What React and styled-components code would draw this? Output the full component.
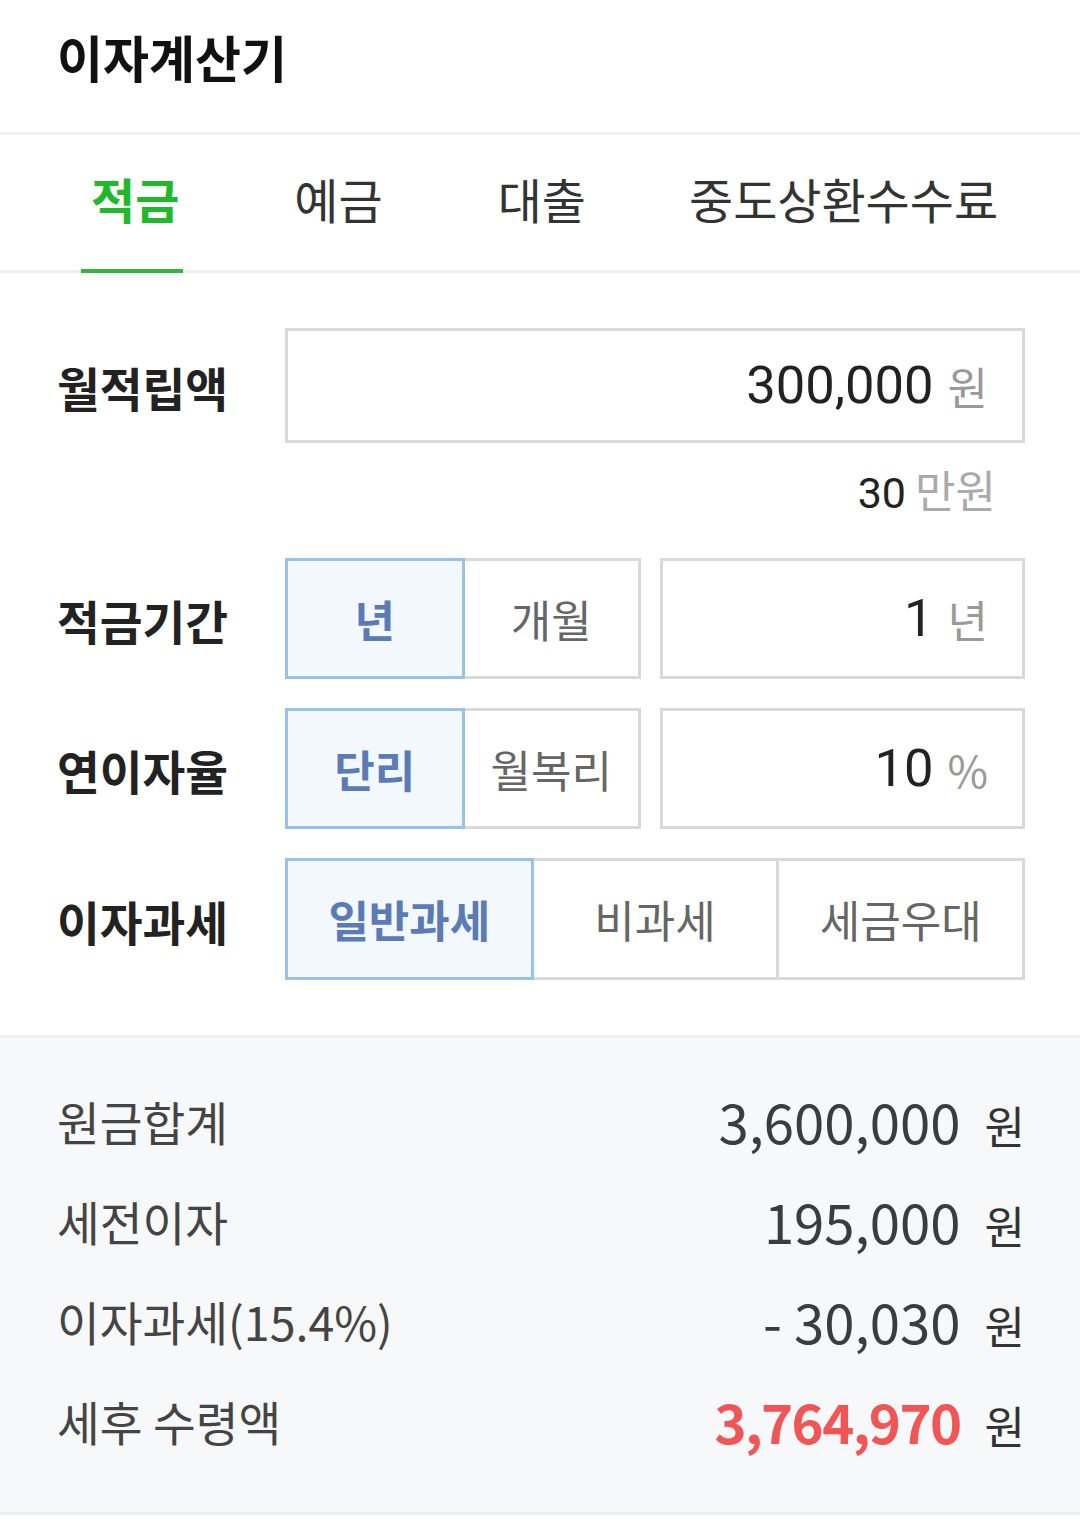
import styled, { createGlobalStyle } from "styled-components";

const GlobalStyle = createGlobalStyle`
    body {
        margin: 0;
        background: #ffffff;
        font-family: "Noto Sans CJK KR", "Noto Sans", sans-serif;
        color: #222;
    }
`;

const Page = styled.div`
    width: 1080px;
    display: flex;
    flex-direction: column;
`;

// Top bar with the page title
const Header = styled.header`
    height: 135px;
    box-sizing: border-box;
    padding: 31px 57px 0;
    border-bottom: 3px solid #eef0f2;
`;

const Title = styled.h1`
    margin: 0;
    font-size: 50px;
    line-height: 1;
    font-weight: 700;
    color: #111;
`;

// Calculator type tabs
const TabBar = styled.nav`
    height: 138px;
    box-sizing: border-box;
    display: flex;
    align-items: stretch;
    gap: 101px;
    padding-left: 81px;
    border-bottom: 3px solid #eceef0;
`;

const Tab = styled.div`
    display: flex;
    align-items: center;
    padding: 0 4px 8px 10px;
    margin-bottom: -3px;
    font-size: 48px;
    line-height: 1;
    font-weight: ${(p) => (p.$active ? 700 : 400)};
    color: ${(p) => (p.$active ? "#20b92b" : "#333")};
    border-bottom: 4px solid ${(p) => (p.$active ? "#2fb83a" : "transparent")};

    &:last-child {
        margin-left: -12px;
    }
`;

// Input form
const Form = styled.section`
    display: flex;
    flex-direction: column;
    padding: 55px 55px 55px 57px;
`;

const FormRow = styled.div`
    display: grid;
    grid-template-columns: 228px 1fr;
    align-items: center;
    margin-top: ${(p) => p.$gap || 0}px;
`;

const Label = styled.div`
    font-size: 46.5px;
    line-height: 1;
    font-weight: 700;
    color: #222;
    padding-top: 4px;
`;

const Controls = styled.div`
    display: grid;
    grid-template-columns: ${(p) => p.$cols};
    gap: 19px;
`;

const Segments = styled.div`
    display: flex;
`;

const Segment = styled.div`
    position: relative;
    z-index: ${(p) => (p.$active ? 1 : 0)};
    flex: 1;
    height: ${(p) => p.$h}px;
    box-sizing: border-box;
    display: flex;
    align-items: center;
    justify-content: center;
    margin-left: -3px;
    &:first-child {
        margin-left: 0;
    }
    border: 3px solid ${(p) => (p.$active ? "#95c3ec" : "#d9d9d9")};
    background: ${(p) => (p.$active ? "#f2f8fe" : "#ffffff")};
    font-size: 44px;
    line-height: 1;
    font-weight: ${(p) => (p.$active ? 700 : 400)};
    color: ${(p) => (p.$active ? "#5a7bb5" : "#666")};
`;

const InputBox = styled.div`
    height: ${(p) => p.$h}px;
    box-sizing: border-box;
    display: flex;
    align-items: center;
    justify-content: flex-end;
    gap: 14px;
    padding-right: 34px;
    border: 3px solid #d9d9d9;
    background: #fff;
`;

const InputValue = styled.span`
    font-family: Roboto, "Noto Sans CJK KR", sans-serif;
    font-size: 52.5px;
    line-height: 1;
    color: #222;
`;

const Unit = styled.span`
    font-size: 44px;
    line-height: 1;
    color: #999;
`;

const Hint = styled.div`
    display: flex;
    justify-content: flex-end;
    align-items: baseline;
    gap: 9px;
    padding-right: 29px;
    margin-top: 24px;
    line-height: 1;
`;

const HintNumber = styled.span`
    font-family: Roboto, "Noto Sans CJK KR", sans-serif;
    font-size: 43px;
    color: #222;
`;

const HintUnit = styled.span`
    font-size: 44px;
    color: #aaa;
`;

// Result summary
const Results = styled.section`
    background: #f7f8fa;
    border-top: 3px solid #eef0f2;
    border-bottom: 3px solid #eceef1;
    padding: 33px 55px 41px 57px;
    display: flex;
    flex-direction: column;
`;

const ResultRow = styled.div`
    height: 100px;
    display: flex;
    align-items: center;
    justify-content: space-between;
`;

const ResultLabel = styled.span`
    font-size: 46.5px;
    line-height: 1;
    color: #444;
`;

const ResultValue = styled.span`
    display: flex;
    align-items: baseline;
    gap: 24px;
    line-height: 1;
`;

const Amount = styled.span`
    font-size: 54.5px;
    font-weight: ${(p) => (p.$highlight ? 700 : 400)};
    color: ${(p) => (p.$highlight ? "#f25555" : "#3c3c3c")};
    letter-spacing: ${(p) => (p.$highlight ? "-1.6px" : "0")};
`;

const Won = styled.span`
    font-size: 44px;
    color: #333;
`;

const tabs = ["적금", "예금", "대출", "중도상환수수료"];

const results = [
    { label: "원금합계", value: "3,600,000" },
    { label: "세전이자", value: "195,000" },
    { label: "이자과세(15.4%)", value: "- 30,030" },
    { label: "세후 수령액", value: "3,764,970", highlight: true },
];

export default function App() {
    return (
        <Page>
            <GlobalStyle />
            <Header>
                <Title>이자계산기</Title>
            </Header>

            <TabBar>
                {tabs.map((t, i) => (
                    <Tab key={t} $active={i === 0}>
                        {t}
                    </Tab>
                ))}
            </TabBar>

            <Form>
                <FormRow>
                    <Label>월적립액</Label>
                    <InputBox $h={115}>
                        <InputValue>300,000</InputValue>
                        <Unit>원</Unit>
                    </InputBox>
                </FormRow>
                <Hint>
                    <HintNumber>30</HintNumber>
                    <HintUnit>만원</HintUnit>
                </Hint>

                <FormRow $gap={43}>
                    <Label>적금기간</Label>
                    <Controls $cols="356px 1fr">
                        <Segments>
                            <Segment $h={121} $active>년</Segment>
                            <Segment $h={121}>개월</Segment>
                        </Segments>
                        <InputBox $h={121}>
                            <InputValue>1</InputValue>
                            <Unit>년</Unit>
                        </InputBox>
                    </Controls>
                </FormRow>

                <FormRow $gap={29}>
                    <Label>연이자율</Label>
                    <Controls $cols="356px 1fr">
                        <Segments>
                            <Segment $h={121} $active>단리</Segment>
                            <Segment $h={121}>월복리</Segment>
                        </Segments>
                        <InputBox $h={121}>
                            <InputValue>10</InputValue>
                            <Unit>%</Unit>
                        </InputBox>
                    </Controls>
                </FormRow>

                <FormRow $gap={29}>
                    <Label>이자과세</Label>
                    <Segments>
                        <Segment $h={122} $active>일반과세</Segment>
                        <Segment $h={122}>비과세</Segment>
                        <Segment $h={122}>세금우대</Segment>
                    </Segments>
                </FormRow>
            </Form>

            <Results>
                {results.map((r) => (
                    <ResultRow key={r.label}>
                        <ResultLabel>{r.label}</ResultLabel>
                        <ResultValue>
                            <Amount $highlight={r.highlight}>{r.value}</Amount>
                            <Won>원</Won>
                        </ResultValue>
                    </ResultRow>
                ))}
            </Results>
        </Page>
    );
}
